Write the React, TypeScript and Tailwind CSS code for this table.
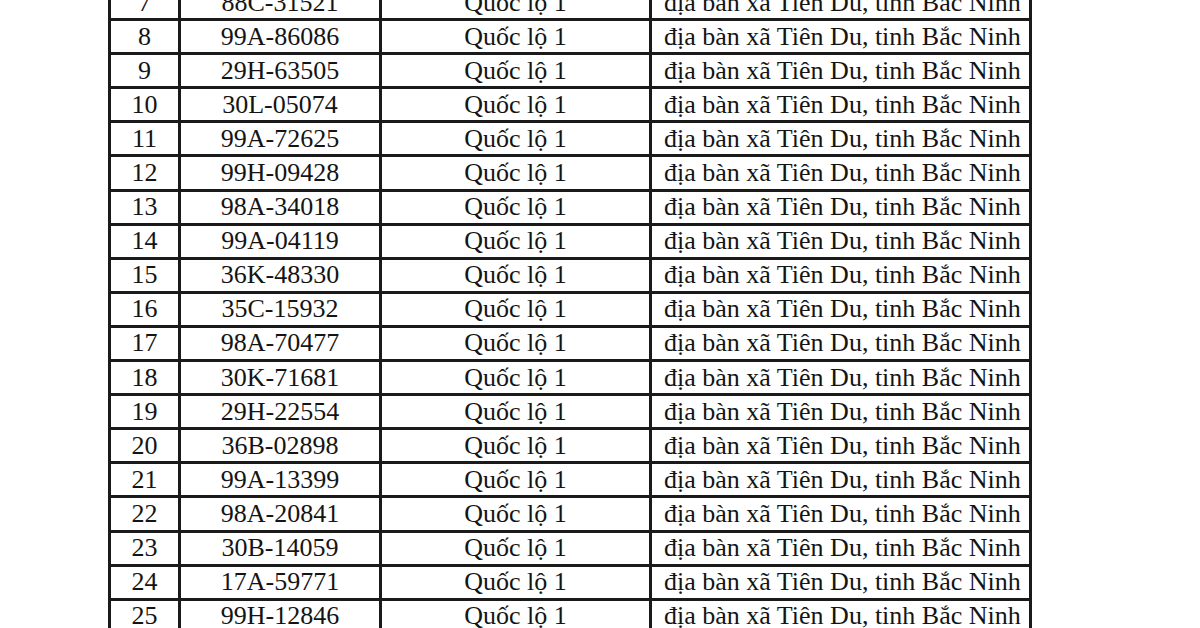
const rows: [number, string][] = [
  [7, "88C-31521"],
  [8, "99A-86086"],
  [9, "29H-63505"],
  [10, "30L-05074"],
  [11, "99A-72625"],
  [12, "99H-09428"],
  [13, "98A-34018"],
  [14, "99A-04119"],
  [15, "36K-48330"],
  [16, "35C-15932"],
  [17, "98A-70477"],
  [18, "30K-71681"],
  [19, "29H-22554"],
  [20, "36B-02898"],
  [21, "99A-13399"],
  [22, "98A-20841"],
  [23, "30B-14059"],
  [24, "17A-59771"],
  [25, "99H-12846"],
];

export default function App() {
  return (
    <div className="w-[1200px] h-[628px] overflow-hidden bg-white">
      <table
        className="ml-[108px] -mt-[16px] border-collapse border-[3px] border-[#1a1a1a] text-[26px] leading-none text-[#141414]"
        style={{ fontFamily: '"Liberation Serif", "Times New Roman", serif' }}
      >
        <colgroup>
          <col className="w-[70px]" />
          <col className="w-[201px]" />
          <col className="w-[270px]" />
          <col className="w-[380px]" />
        </colgroup>
        <tbody>
          {rows.map(([n, plate]) => (
            <tr key={n} className="h-[34.1px]">
              <td className="border-[3px] border-[#1a1a1a] text-center p-0">{n}</td>
              <td className="border-[3px] border-[#1a1a1a] text-center p-0">{plate}</td>
              <td className="border-[3px] border-[#1a1a1a] text-center p-0">Quốc lộ 1</td>
              <td className="border-[3px] border-[#1a1a1a] pl-[12px] p-0">địa bàn xã Tiên Du, tinh Bắc Ninh</td>
            </tr>
          ))}
        </tbody>
      </table>
    </div>
  );
}
